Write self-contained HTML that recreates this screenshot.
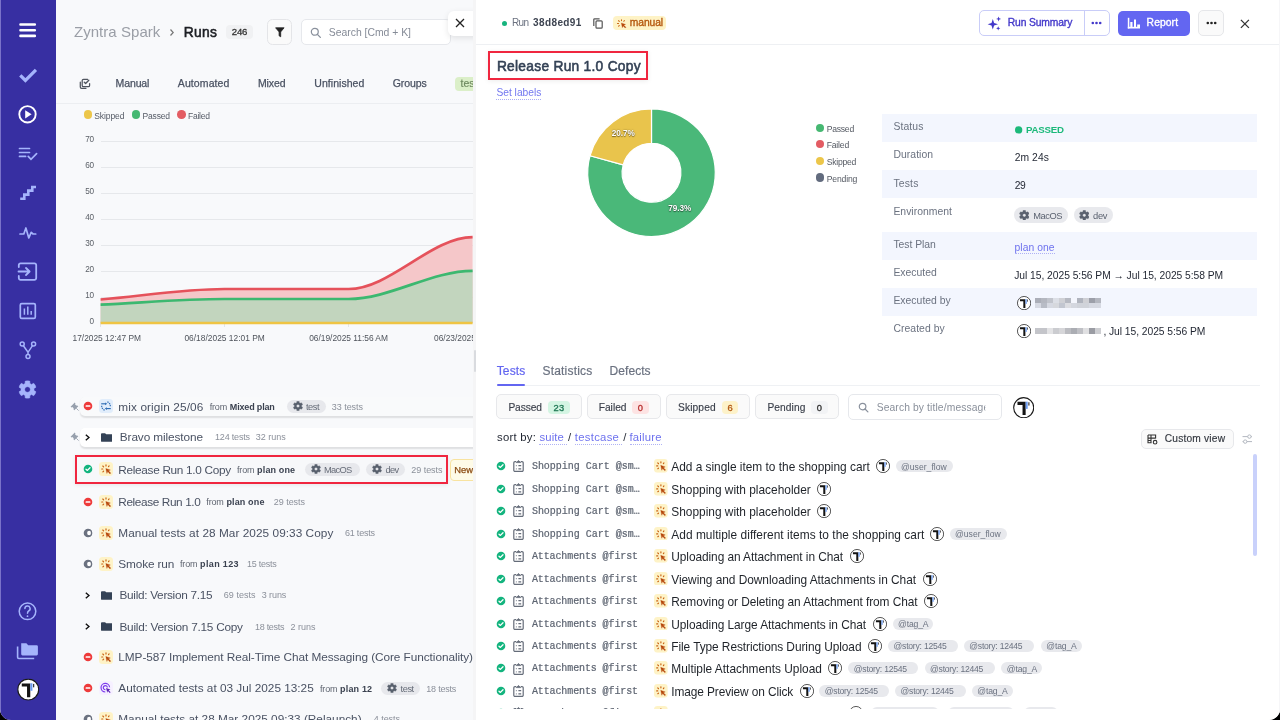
<!DOCTYPE html>
<html><head><meta charset="utf-8">
<style>
*{box-sizing:border-box;margin:0;padding:0}
html,body{width:1280px;height:720px;overflow:hidden;background:#000;font-family:"Liberation Sans",sans-serif}
#app{position:absolute;left:0;top:0;width:1280px;height:720px;border-radius:0 0 11px 11px;overflow:hidden;background:#f8f9fb;will-change:transform}
.a{position:absolute}
.t{position:absolute;white-space:nowrap;line-height:1}
#sb{position:absolute;left:0;top:0;width:56px;height:720px;background:#372fa2;z-index:5}
#left{position:absolute;left:0;top:0;width:473px;height:720px;overflow:hidden}
</style></head>
<body><div id="app">

<svg width="0" height="0" style="position:absolute">
<defs>
 <symbol id="st-fail" viewBox="0 0 10 10"><circle cx="5" cy="5" r="4.3" fill="#ee3b3b"/><rect x="2.6" y="4.3" width="4.8" height="1.5" rx=".4" fill="#fff"/></symbol>
 <symbol id="st-pass" viewBox="0 0 10 10"><circle cx="5" cy="5" r="4.3" fill="#13b47e"/><path d="M3 5.2L4.4 6.4L7 3.8" stroke="#fff" stroke-width="1.3" fill="none" stroke-linecap="round" stroke-linejoin="round"/></symbol>
 <symbol id="st-prog" viewBox="0 0 10 10"><circle cx="5" cy="5" r="4.3" fill="#6b7280"/><circle cx="6.3" cy="5" r="2.2" fill="#fff"/><path d="M5 1.5A3.5 3.5 0 0 1 5 8.5" stroke="#6b7280" stroke-width="1.2" fill="none"/></symbol>
 <symbol id="ic-man" viewBox="0 0 14 14"><rect width="14" height="14" rx="3.5" fill="#fef3c7"/>
   <g stroke="#c8610f" stroke-width="1.15" stroke-linecap="round"><path d="M3.8 4L4.6 4.8"/><path d="M7 2.9V3.9"/><path d="M10.1 3.9L9.5 4.6"/><path d="M2.7 7H3.8"/><path d="M3.9 9.9L4.6 9.2"/></g>
   <path d="M6.8 6.4L11.4 8L9.5 8.8L11.8 11.1L11 11.9L8.7 9.6L7.9 11.5Z" fill="#b8480c" stroke="#b8480c" stroke-width=".3" stroke-linejoin="round"/></symbol>
 <symbol id="ic-auto" viewBox="0 0 14 14"><rect width="14" height="14" rx="3.5" fill="#f6f0ff"/>
   <g stroke="#7c3aed" stroke-width="1.2" fill="none"><path d="M10.6 6.2A4.3 4.3 0 1 0 6.3 11"/><path d="M8.3 6.6A2 2 0 1 0 6.4 8.6"/></g>
   <path d="M7.1 7.1L11.4 8.6L9.7 9.3L11.6 11.2L10.8 12L8.9 10.1L8.2 11.8Z" fill="#5b21b6"/></symbol>
 <symbol id="ic-mix" viewBox="0 0 14 14"><rect width="14" height="14" rx="3.5" fill="#e1edfb"/>
   <g stroke="#2f6db5" stroke-width="1.15" fill="none"><path d="M8.4 2.9A4.3 4.3 0 0 1 11.3 7.4" stroke-dasharray="1.3 .8"/><path d="M5.6 11.1A4.3 4.3 0 0 1 2.7 6.6" stroke-dasharray="1.3 .8"/><path d="M2.2 4.8H6.6"/><path d="M11.8 9.6H7.4"/></g>
   <path d="M8.2 4.8L6.1 3.4V6.2Z M5.8 9.6L7.9 8.2V11Z" fill="#2f6db5"/></symbol>
 <symbol id="ic-folder" viewBox="0 0 12 9"><path d="M0 1A1 1 0 0 1 1 0H4.2L5.4 1.2H11A1 1 0 0 1 12 2.2V8A1 1 0 0 1 11 9H1A1 1 0 0 1 0 8Z" fill="#344256"/></symbol>
 <symbol id="ic-chev" viewBox="0 0 5 7"><path d="M.8 .7L4 3.5L.8 6.3" stroke="#111" stroke-width="1.4" fill="none"/></symbol>
 <symbol id="ic-pin" viewBox="0 0 9 9"><g transform="translate(9 0) scale(-1 1)"><path d="M4.2 .6L8.4 4.8L7.6 5.4L6.6 5.1L5.4 6.3L5.3 7.8L4.7 8.3L.7 4.3L1.2 3.7L2.7 3.6L3.9 2.4L3.6 1.4Z" fill="#97a0ad"/><path d="M2.7 6.3L.4 8.6" stroke="#97a0ad" stroke-width=".9"/></g></symbol>
 <symbol id="ic-gear" viewBox="-10.5 -10.5 21 21"><path fill="currentColor" fill-rule="evenodd" stroke="currentColor" stroke-width=".6" stroke-linejoin="round" d="M-2.77 -6.86L-2.59 -9.66A10 10 0 0 1 2.59 -9.66L2.77 -6.86A7.4 7.4 0 0 1 4.56 -5.83L7.07 -7.07A10 10 0 0 1 9.66 -2.59L7.33 -1.03A7.4 7.4 0 0 1 7.33 1.03L9.66 2.59A10 10 0 0 1 7.07 7.07L4.56 5.83A7.4 7.4 0 0 1 2.77 6.86L2.59 9.66A10 10 0 0 1 -2.59 9.66L-2.77 6.86A7.4 7.4 0 0 1 -4.56 5.83L-7.07 7.07A10 10 0 0 1 -9.66 2.59L-7.33 1.03A7.4 7.4 0 0 1 -7.33 -1.03L-9.66 -2.59A10 10 0 0 1 -7.07 -7.07L-4.56 -5.83A7.4 7.4 0 0 1 -2.77 -6.86ZM0 -3.2A3.2 3.2 0 1 0 0.01 -3.2Z"/></symbol>
 <symbol id="ic-av" viewBox="0 0 22 22"><circle cx="11" cy="11" r="10.3" fill="#fff" stroke="#1a1a1a" stroke-width="1.15"/><path d="M4.6 5H13V18.6H9.8V8.1H4.6Z" fill="#141414"/><rect x="13.1" y="4.8" width="2" height="7.4" fill="#6b9cf2"/><rect x="15.8" y="5.4" width="1.1" height="3.4" fill="#222"/></symbol>
 <symbol id="ic-search" viewBox="0 0 12 12"><circle cx="5" cy="5" r="3.6" stroke="currentColor" stroke-width="1.3" fill="none"/><path d="M7.7 7.7L10.8 10.8" stroke="currentColor" stroke-width="1.4" stroke-linecap="round"/></symbol>
 <symbol id="ic-clip" viewBox="0 0 11 12"><path d="M3.3 1.6H2A1.2 1.2 0 0 0 .8 2.8V10.2A1.2 1.2 0 0 0 2 11.4H9A1.2 1.2 0 0 0 10.2 10.2V2.8A1.2 1.2 0 0 0 9 1.6H7.7" stroke="#656c79" stroke-width="1.2" fill="none"/><path d="M3.3 2.6L5.5 .5L7.7 2.6Z" fill="#656c79" stroke="#656c79" stroke-width=".8" stroke-linejoin="round"/><path d="M2.9 5.6H3.6M5.4 5.6H8.2M2.9 8.9H3.6M5.4 8.9H8.2" stroke="#656c79" stroke-width="1.1"/></symbol>
</defs></svg>
<div id="left">
<div class="t" style="left:74.00px;top:24.00px;font-size:15px;color:#9a9ea6;letter-spacing:0.040px;">Zyntra Spark</div>
<svg class="a" style="left:169px;top:28px" width="6" height="9"><path d="M1.5 1.5L4.2 4.5L1.5 7.5" stroke="#777" stroke-width="1.2" fill="none"/></svg>
<div class="t" style="left:183.80px;top:26.00px;font-size:13.8px;color:#1d1f24;letter-spacing:0.297px;-webkit-text-stroke:.55px #1d1f24;">Runs</div>
<div class="a" style="left:226px;top:25px;width:27px;height:14px;background:#f0f1f3;border-radius:4px"></div>
<div class="t" style="left:231.80px;top:27.00px;font-size:9.6px;color:#333;letter-spacing:-0.203px;-webkit-text-stroke:.3px #333;">246</div>
<div class="a" style="left:267.2px;top:19.2px;width:24.8px;height:25.4px;background:#fafafa;border:1px solid #e4e5e8;border-radius:5.5px"></div>
<svg class="a" style="left:274.6px;top:27px" width="11" height="11"><path d="M.6 .8H9.1L5.7 4.9V9.8L4.1 8.8V4.9Z" fill="#222" stroke="#222" stroke-width=".8" stroke-linejoin="round"/></svg>
<div class="a" style="left:301px;top:19px;width:150px;height:25.5px;background:#fff;border:1px solid #e6e8ec;border-radius:5px"></div>
<svg class="a" style="left:310.30px;top:26.50px;color:#8a919d" width="11.5" height="11.5"><use href="#ic-search" width="11.5" height="11.5"/></svg>
<div class="t" style="left:328.80px;top:28.00px;font-size:10.4px;color:#858b97;letter-spacing:-0.006px;">Search [Cmd + K]</div>
<div class="a" style="left:447.5px;top:10.5px;width:34px;height:25px;background:#fff;border-radius:6px;box-shadow:0 2px 6px rgba(0,0,0,.10)"></div>
<svg class="a" style="left:455px;top:18px" width="10" height="10"><path d="M1 1L9 9M9 1L1 9" stroke="#222" stroke-width="1.3"/></svg>
<svg class="a" style="left:76px;top:74px" width="20" height="20"><g stroke="#50555f" stroke-width="1.25" fill="none" stroke-linecap="round" stroke-linejoin="round"><path d="M11.6 5.3H7.5A1.3 1.3 0 0 0 6.2 6.6V11.4A1.3 1.3 0 0 0 7.5 12.7H12.3A1.3 1.3 0 0 0 13.6 11.4V9.6"/><path d="M8.3 8.3L9.6 9.5L12.8 6.2" stroke-width="1.35"/><path d="M4.3 8.2V13.1A1.3 1.3 0 0 0 5.6 14.4H9.9"/></g></svg>
<div class="t" style="left:115.60px;top:78.00px;font-size:10.5px;color:#4a5262;letter-spacing:-0.128px;-webkit-text-stroke:.25px #4a5262;">Manual</div>
<div class="t" style="left:177.80px;top:78.00px;font-size:10.5px;color:#4a5262;letter-spacing:0.102px;-webkit-text-stroke:.25px #4a5262;">Automated</div>
<div class="t" style="left:257.90px;top:78.00px;font-size:10.5px;color:#4a5262;letter-spacing:-0.052px;-webkit-text-stroke:.25px #4a5262;">Mixed</div>
<div class="t" style="left:314.30px;top:78.00px;font-size:10.5px;color:#4a5262;letter-spacing:0.043px;-webkit-text-stroke:.25px #4a5262;">Unfinished</div>
<div class="t" style="left:392.70px;top:78.00px;font-size:10.5px;color:#4a5262;letter-spacing:-0.087px;-webkit-text-stroke:.25px #4a5262;">Groups</div>
<div class="a" style="left:455px;top:76.5px;width:40px;height:14.5px;background:#dbefc8;border-radius:4px"></div>
<div class="t" style="left:460.60px;top:78.00px;font-size:10.5px;color:#6f8a60;-webkit-text-stroke:.2px #6f8a60;">tes</div>
<div class="a" style="left:56px;top:103px;width:417px;height:1px;background:#eceef1"></div>
<div class="a" style="left:83.70px;top:110.4px;width:8.6px;height:8.6px;border-radius:50%;background:#ecc64a"></div>
<div class="t" style="left:94.20px;top:112.00px;font-size:8.5px;color:#555b66;letter-spacing:-0.086px;">Skipped</div>
<div class="a" style="left:131.60px;top:110.4px;width:8.6px;height:8.6px;border-radius:50%;background:#45b872"></div>
<div class="t" style="left:142.50px;top:112.00px;font-size:8.5px;color:#555b66;letter-spacing:-0.150px;">Passed</div>
<div class="a" style="left:177.10px;top:110.4px;width:8.6px;height:8.6px;border-radius:50%;background:#e35d63"></div>
<div class="t" style="left:188.00px;top:112.00px;font-size:8.5px;color:#555b66;letter-spacing:-0.230px;">Failed</div>
<div class="a" style="left:100.6px;top:140.5px;width:373px;height:1px;background:#e6e8eb"></div>
<div class="t" style="left:85.25px;top:136.00px;font-size:8.2px;color:#5c6168;letter-spacing:-0.357px;">70</div>
<div class="a" style="left:100.6px;top:166.5px;width:373px;height:1px;background:#e6e8eb"></div>
<div class="t" style="left:85.25px;top:162.00px;font-size:8.2px;color:#5c6168;letter-spacing:-0.357px;">60</div>
<div class="a" style="left:100.6px;top:192.5px;width:373px;height:1px;background:#e6e8eb"></div>
<div class="t" style="left:85.25px;top:188.00px;font-size:8.2px;color:#5c6168;letter-spacing:-0.357px;">50</div>
<div class="a" style="left:100.6px;top:218.5px;width:373px;height:1px;background:#e6e8eb"></div>
<div class="t" style="left:85.25px;top:214.00px;font-size:8.2px;color:#5c6168;letter-spacing:-0.357px;">40</div>
<div class="a" style="left:100.6px;top:244.5px;width:373px;height:1px;background:#e6e8eb"></div>
<div class="t" style="left:85.25px;top:240.00px;font-size:8.2px;color:#5c6168;letter-spacing:-0.357px;">30</div>
<div class="a" style="left:100.6px;top:270.5px;width:373px;height:1px;background:#e6e8eb"></div>
<div class="t" style="left:85.25px;top:266.00px;font-size:8.2px;color:#5c6168;letter-spacing:-0.357px;">20</div>
<div class="a" style="left:100.6px;top:296.5px;width:373px;height:1px;background:#e6e8eb"></div>
<div class="t" style="left:85.25px;top:292.00px;font-size:8.2px;color:#5c6168;letter-spacing:-0.357px;">10</div>
<div class="t" style="left:89.60px;top:318.00px;font-size:8.2px;color:#5c6168;">0</div>
<div class="t" style="left:72.50px;top:334.00px;font-size:8.4px;color:#4f545c;">17/2025 12:47 PM</div>
<div class="t" style="left:184.40px;top:334.00px;font-size:8.4px;color:#4f545c;letter-spacing:0.017px;">06/18/2025 12:01 PM</div>
<div class="t" style="left:309.20px;top:334.00px;font-size:8.4px;color:#4f545c;letter-spacing:-0.015px;">06/19/2025 11:56 AM</div>
<div class="t" style="left:434.00px;top:334.00px;font-size:8.4px;color:#4f545c;">06/23/2025 12:00 PM</div>
<div class="a" style="left:100.1px;top:323px;width:1px;height:4px;background:#e3e5e8"></div>
<div class="a" style="left:224.0px;top:323px;width:1px;height:4px;background:#e3e5e8"></div>
<div class="a" style="left:348.1px;top:323px;width:1px;height:4px;background:#e3e5e8"></div>
<svg class="a" style="left:0;top:0" width="473" height="330">
<path d="M100.6 299.5 C141.90 296.00 183.20 289.00 224.5 289.0 C265.87 289.00 307.23 289.00 348.6 289.0 C389.93 289.00 431.27 237.20 472.6 237.2 L472.6 323 L100.6 323Z" fill="#f5c7c9"/>
<path d="M100.6 304.6 C141.90 302.73 183.20 299.00 224.5 299.0 C265.87 299.00 307.23 299.00 348.6 299.0 C389.93 299.00 431.27 270.80 472.6 270.8 L472.6 323 L100.6 323Z" fill="#c2d5be"/>
<path d="M100.6 299.5 C141.90 296.00 183.20 289.00 224.5 289.0 C265.87 289.00 307.23 289.00 348.6 289.0 C389.93 289.00 431.27 237.20 472.6 237.2" stroke="#e5525b" stroke-width="2.7" fill="none"/>
<path d="M100.6 304.6 C141.90 302.73 183.20 299.00 224.5 299.0 C265.87 299.00 307.23 299.00 348.6 299.0 C389.93 299.00 431.27 270.80 472.6 270.8" stroke="#3cb870" stroke-width="2.7" fill="none"/>
<path d="M100.6 323H472.6" stroke="#efc443" stroke-width="2.6"/>
</svg>
<div class="a" style="left:79.5px;top:397px;width:400px;height:19px;background:#f9fafb;border-radius:5px;box-shadow:0 1.5px 1.5px rgba(0,0,0,.10)"></div>
<div class="a" style="left:79.5px;top:427.5px;width:400px;height:19.3px;background:#fff;border-radius:5px;box-shadow:0 1.5px 1.5px rgba(0,0,0,.10)"></div>
<svg class="a" style="left:69.60px;top:401.80px;" width="9" height="9"><use href="#ic-pin" width="9" height="9"/></svg>
<svg class="a" style="left:69.60px;top:432.30px;" width="9" height="9"><use href="#ic-pin" width="9" height="9"/></svg>
<svg class="a" style="left:82.70px;top:401.40px;" width="10" height="10"><use href="#st-fail" width="10" height="10"/></svg>
<svg class="a" style="left:98.70px;top:399.40px;" width="14" height="14"><use href="#ic-mix" width="14" height="14"/></svg>
<div class="t" style="left:118.30px;top:402.00px;font-size:11.8px;color:#4a5263;letter-spacing:0.115px;">mix origin 25/06</div>
<div class="t" style="left:209.70px;top:403.00px;font-size:9px;color:#5f6570;letter-spacing:-0.167px;">from</div>
<div class="t" style="left:229.80px;top:403.00px;font-size:9px;color:#3b4250;font-weight:bold;letter-spacing:-0.167px;">Mixed plan</div>
<div class="a" style="left:286.60px;top:399.80px;width:39.60px;height:13.2px;background:#e7e8ec;border-radius:7px"></div>
<svg class="a" style="left:292.70px;top:401.20px;color:#58606d" width="10" height="10"><use href="#ic-gear" width="10" height="10"/></svg>
<div class="t" style="left:305.90px;top:403.00px;font-size:9.3px;color:#666c78;letter-spacing:-0.462px;">test</div>
<div class="t" style="left:331.80px;top:403.00px;font-size:9px;color:#8b909a;letter-spacing:-0.045px;">33 tests</div>
<svg class="a" style="left:84.80px;top:433.80px;" width="5" height="7"><use href="#ic-chev" width="5" height="7"/></svg>
<svg class="a" style="left:100.90px;top:432.60px;" width="11.6" height="9"><use href="#ic-folder" width="11.6" height="9"/></svg>
<div class="t" style="left:119.80px;top:432.00px;font-size:11.8px;color:#4a5263;letter-spacing:-0.099px;">Bravo milestone</div>
<div class="t" style="left:215.00px;top:433.00px;font-size:9px;color:#8b909a;letter-spacing:-0.190px;">124 tests</div>
<div class="t" style="left:255.80px;top:433.00px;font-size:9px;color:#8b909a;">32 runs</div>
<div class="a" style="left:75.3px;top:455.3px;width:373.1px;height:28.3px;border:2.4px solid #f0263f;box-shadow:0 1px 4px rgba(0,0,0,.08);background:#f7f8fa"></div>
<svg class="a" style="left:82.70px;top:464.40px;" width="10" height="10"><use href="#st-pass" width="10" height="10"/></svg>
<svg class="a" style="left:98.70px;top:462.40px;" width="14" height="14"><use href="#ic-man" width="14" height="14"/></svg>
<div class="t" style="left:118.30px;top:465.00px;font-size:11.8px;color:#4a5263;letter-spacing:-0.310px;">Release Run 1.0 Copy</div>
<div class="t" style="left:237.00px;top:466.00px;font-size:9px;color:#5f6570;letter-spacing:-0.167px;">from</div>
<div class="t" style="left:257.10px;top:466.00px;font-size:9px;color:#3b4250;font-weight:bold;letter-spacing:0.143px;">plan one</div>
<div class="a" style="left:304.70px;top:462.80px;width:55.50px;height:13.2px;background:#e7e8ec;border-radius:7px"></div>
<svg class="a" style="left:310.80px;top:464.20px;color:#58606d" width="10" height="10"><use href="#ic-gear" width="10" height="10"/></svg>
<div class="t" style="left:324.00px;top:466.00px;font-size:9.3px;color:#666c78;letter-spacing:-0.674px;">MacOS</div>
<div class="a" style="left:366.20px;top:462.80px;width:39.00px;height:13.2px;background:#e7e8ec;border-radius:7px"></div>
<svg class="a" style="left:372.30px;top:464.20px;color:#58606d" width="10" height="10"><use href="#ic-gear" width="10" height="10"/></svg>
<div class="t" style="left:385.50px;top:466.00px;font-size:9.3px;color:#666c78;letter-spacing:-0.695px;">dev</div>
<div class="t" style="left:411.30px;top:466.00px;font-size:9px;color:#8b909a;letter-spacing:-0.045px;">29 tests</div>
<div class="a" style="left:450px;top:458.7px;width:40px;height:22.3px;background:#fefbe8;border:1px solid #f8e3a0;border-radius:4px"></div>
<div class="t" style="left:454.20px;top:465.00px;font-size:9.4px;color:#8a4a12;-webkit-text-stroke:.25px #8a4a12;">New</div>
<svg class="a" style="left:82.70px;top:497.00px;" width="10" height="10"><use href="#st-fail" width="10" height="10"/></svg>
<svg class="a" style="left:98.70px;top:495.00px;" width="14" height="14"><use href="#ic-man" width="14" height="14"/></svg>
<div class="t" style="left:118.30px;top:497.00px;font-size:11.8px;color:#4a5263;letter-spacing:-0.384px;">Release Run 1.0</div>
<div class="t" style="left:206.30px;top:498.00px;font-size:9px;color:#5f6570;letter-spacing:-0.167px;">from</div>
<div class="t" style="left:226.40px;top:498.00px;font-size:9px;color:#3b4250;font-weight:bold;letter-spacing:0.143px;">plan one</div>
<div class="t" style="left:273.80px;top:498.00px;font-size:9px;color:#8b909a;letter-spacing:-0.045px;">29 tests</div>
<svg class="a" style="left:82.70px;top:528.00px;" width="10" height="10"><use href="#st-prog" width="10" height="10"/></svg>
<svg class="a" style="left:98.70px;top:526.00px;" width="14" height="14"><use href="#ic-man" width="14" height="14"/></svg>
<div class="t" style="left:118.30px;top:528.00px;font-size:11.8px;color:#4a5263;letter-spacing:0.051px;">Manual tests at 28 Mar 2025 09:33 Copy</div>
<div class="t" style="left:345.00px;top:529.00px;font-size:9px;color:#8b909a;letter-spacing:-0.217px;">61 tests</div>
<svg class="a" style="left:82.70px;top:558.70px;" width="10" height="10"><use href="#st-prog" width="10" height="10"/></svg>
<svg class="a" style="left:98.70px;top:556.70px;" width="14" height="14"><use href="#ic-man" width="14" height="14"/></svg>
<div class="t" style="left:118.30px;top:559.00px;font-size:11.8px;color:#4a5263;letter-spacing:-0.130px;">Smoke run</div>
<div class="t" style="left:180.00px;top:560.00px;font-size:9px;color:#5f6570;letter-spacing:-0.167px;">from</div>
<div class="t" style="left:200.10px;top:560.00px;font-size:9px;color:#3b4250;font-weight:bold;letter-spacing:0.355px;">plan 123</div>
<div class="t" style="left:247.00px;top:560.00px;font-size:9px;color:#8b909a;letter-spacing:-0.260px;">15 tests</div>
<svg class="a" style="left:84.80px;top:591.80px;" width="5" height="7"><use href="#ic-chev" width="5" height="7"/></svg>
<svg class="a" style="left:100.90px;top:590.60px;" width="11.6" height="9"><use href="#ic-folder" width="11.6" height="9"/></svg>
<div class="t" style="left:119.50px;top:590.00px;font-size:11.8px;color:#4a5263;letter-spacing:-0.298px;">Build: Version 7.15</div>
<div class="t" style="left:223.80px;top:591.00px;font-size:9px;color:#8b909a;letter-spacing:0.026px;">69 tests</div>
<div class="t" style="left:261.80px;top:591.00px;font-size:9px;color:#8b909a;letter-spacing:-0.103px;">3 runs</div>
<svg class="a" style="left:84.80px;top:623.20px;" width="5" height="7"><use href="#ic-chev" width="5" height="7"/></svg>
<svg class="a" style="left:100.90px;top:622.00px;" width="11.6" height="9"><use href="#ic-folder" width="11.6" height="9"/></svg>
<div class="t" style="left:119.50px;top:622.00px;font-size:11.8px;color:#4a5263;letter-spacing:-0.247px;">Build: Version 7.15 Copy</div>
<div class="t" style="left:255.00px;top:623.00px;font-size:9px;color:#8b909a;letter-spacing:-0.288px;">18 tests</div>
<div class="t" style="left:290.50px;top:623.00px;font-size:9px;color:#8b909a;">2 runs</div>
<svg class="a" style="left:82.70px;top:652.20px;" width="10" height="10"><use href="#st-fail" width="10" height="10"/></svg>
<svg class="a" style="left:98.70px;top:650.20px;" width="14" height="14"><use href="#ic-man" width="14" height="14"/></svg>
<div class="t" style="left:118.30px;top:652.00px;font-size:11.8px;color:#4a5263;letter-spacing:-0.056px;">LMP-587 Implement Real-Time Chat Messaging (Core Functionality)</div>
<svg class="a" style="left:82.70px;top:683.20px;" width="10" height="10"><use href="#st-fail" width="10" height="10"/></svg>
<svg class="a" style="left:98.70px;top:681.20px;" width="14" height="14"><use href="#ic-auto" width="14" height="14"/></svg>
<div class="t" style="left:118.30px;top:683.00px;font-size:11.8px;color:#4a5263;">Automated tests at 03 Jul 2025 13:25</div>
<div class="t" style="left:320.00px;top:685.00px;font-size:9px;color:#5f6570;letter-spacing:-0.167px;">from</div>
<div class="t" style="left:340.10px;top:685.00px;font-size:9px;color:#3b4250;font-weight:bold;letter-spacing:0.165px;">plan 12</div>
<div class="a" style="left:381.30px;top:681.60px;width:39.20px;height:13.2px;background:#e7e8ec;border-radius:7px"></div>
<svg class="a" style="left:387.40px;top:683.00px;color:#58606d" width="10" height="10"><use href="#ic-gear" width="10" height="10"/></svg>
<div class="t" style="left:400.60px;top:685.00px;font-size:9.3px;color:#666c78;letter-spacing:-0.462px;">test</div>
<div class="t" style="left:426.30px;top:685.00px;font-size:9px;color:#8b909a;letter-spacing:-0.217px;">18 tests</div>
<svg class="a" style="left:82.70px;top:713.60px;" width="10" height="10"><use href="#st-prog" width="10" height="10"/></svg>
<svg class="a" style="left:98.70px;top:711.60px;" width="14" height="14"><use href="#ic-man" width="14" height="14"/></svg>
<div class="t" style="left:118.30px;top:714.00px;font-size:11.8px;color:#4a5263;">Manual tests at 28 Mar 2025 09:33 (Relaunch)</div>
<div class="t" style="left:373.80px;top:715.00px;font-size:9px;color:#8b909a;letter-spacing:-0.052px;">4 tests</div>
</div>
<div class="a" style="left:473px;top:0;width:3px;height:720px;background:#f5f5f6"></div>
<div class="a" style="left:473.5px;top:349.5px;width:2.5px;height:22px;background:#d9dbdf;border-radius:2px"></div>
<div class="a" style="left:476px;top:0;width:804px;height:720px;background:#fff"></div>
<div class="a" style="left:1279px;top:0;width:1px;height:720px;background:#f6f6f8"></div>
<div class="a" style="left:476px;top:44px;width:803px;height:1px;background:#eef0f3"></div>
<div class="a" style="left:502.2px;top:20.9px;width:5px;height:5px;border-radius:50%;background:#17b47e"></div>
<div class="t" style="left:511.90px;top:18.00px;font-size:10px;color:#6b7280;letter-spacing:-0.622px;">Run</div>
<div class="t" style="left:533.00px;top:18.00px;font-size:10px;color:#3d4451;font-weight:bold;letter-spacing:0.402px;">38d8ed91</div>
<svg class="a" style="left:593px;top:18px" width="10" height="11"><rect x="3" y="2.8" width="6.2" height="7.4" rx="1" stroke="#555" stroke-width="1.2" fill="none"/><path d="M.8 8V1.6A.8.8 0 0 1 1.6 .8H6.6" stroke="#555" stroke-width="1.2" fill="none"/></svg>
<div class="a" style="left:613px;top:16.2px;width:52.8px;height:13.5px;background:#fef3c6;border-radius:4px"></div>
<svg class="a" style="left:614.50px;top:16.50px;" width="13" height="13"><use href="#ic-man" width="13" height="13"/></svg>
<div class="a" style="left:614.5px;top:16.5px;width:13px;height:13px;background:#fef3c6;mix-blend-mode:multiply;opacity:0"></div>
<div class="t" style="left:629.80px;top:18.00px;font-size:10.3px;color:#b5580e;letter-spacing:-0.094px;-webkit-text-stroke:.35px #b5580e;">manual</div>
<div class="a" style="left:979px;top:10.3px;width:130.6px;height:25.6px;border:1px solid #c9cdf8;border-radius:5px;background:#fff"></div>
<div class="a" style="left:1084px;top:10.3px;width:1px;height:25.6px;background:#c9cdf8"></div>
<svg class="a" style="left:987px;top:16px" width="15" height="15"><path d="M5.8 3L7.1 6.9L11 8.2L7.1 9.5L5.8 13.4L4.5 9.5L.6 8.2L4.5 6.9Z" fill="#4338ca"/><path d="M11.6 .4L12.3 2.2L14.1 2.9L12.3 3.6L11.6 5.4L10.9 3.6L9.1 2.9L10.9 2.2Z" fill="#4338ca"/><path d="M11.2 10.2L11.8 11.7L13.3 12.3L11.8 12.9L11.2 14.4L10.6 12.9L9.1 12.3L10.6 11.7Z" fill="#4338ca"/></svg>
<div class="t" style="left:1007.80px;top:18.00px;font-size:10.3px;color:#4338ca;letter-spacing:-0.130px;-webkit-text-stroke:.35px #4338ca;">Run Summary</div>
<svg class="a" style="left:1091px;top:21px" width="11" height="4"><circle cx="1.8" cy="2" r="1.3" fill="#4338ca"/><circle cx="5.5" cy="2" r="1.3" fill="#4338ca"/><circle cx="9.2" cy="2" r="1.3" fill="#4338ca"/></svg>
<div class="a" style="left:1117.8px;top:10.6px;width:72.2px;height:25.3px;border-radius:5px;background:#6366f1"></div>
<svg class="a" style="left:1127px;top:17px" width="14" height="12"><g fill="#fff"><rect x=".8" y=".8" width="1.5" height="10.7"/><rect x=".8" y="9.8" width="12.2" height="1.7"/><rect x="3.3" y="5" width="2.2" height="5"/><rect x="7" y="2.5" width="2" height="7.5"/><rect x="10.2" y="7.5" width="2.8" height="3"/></g></svg>
<div class="t" style="left:1146.60px;top:18.00px;font-size:10.3px;color:#ffffff;letter-spacing:0.099px;-webkit-text-stroke:.35px #fff;">Report</div>
<div class="a" style="left:1198px;top:10.3px;width:25.5px;height:25.6px;border:1px solid #e6e7ea;border-radius:5px;background:#fafafa"></div>
<svg class="a" style="left:1205.5px;top:21px" width="11" height="4"><circle cx="1.8" cy="2" r="1.3" fill="#222"/><circle cx="5.5" cy="2" r="1.3" fill="#222"/><circle cx="9.2" cy="2" r="1.3" fill="#222"/></svg>
<svg class="a" style="left:1240px;top:18.5px" width="10" height="10"><path d="M.9 .9L8.9 8.9M8.9 .9L.9 8.9" stroke="#333" stroke-width="1.3"/></svg>
<div class="a" style="left:487.6px;top:51.4px;width:160.5px;height:28.2px;border:2.4px solid #f0263f;box-shadow:0 1px 5px rgba(0,0,0,.08)"></div>
<div class="t" style="left:496.90px;top:60.00px;font-size:13.75px;color:#334155;letter-spacing:0.282px;-webkit-text-stroke:.55px #334155;">Release Run 1.0 Copy</div>
<div class="t" style="left:496.40px;top:88.00px;font-size:10.25px;color:#7378f0;">Set labels</div>
<div class="a" style="left:496.4px;top:99.2px;width:45px;height:0;border-top:1px dotted #a9acf5"></div>
<svg class="a" style="left:0;top:0" width="800" height="250"><path d="M651.50 108.95 A63.8 63.8 0 1 1 590.01 155.72 L623.17 164.90 A29.4 29.4 0 1 0 651.50 143.35Z" fill="#4ab879" stroke="#fff" stroke-width="1.2" stroke-linejoin="round"/><path d="M590.01 155.72 A63.8 63.8 0 0 1 651.50 108.95 L651.50 143.35 A29.4 29.4 0 0 0 623.17 164.90Z" fill="#e9c44c" stroke="#fff" stroke-width="1.2" stroke-linejoin="round"/></svg>
<div class="t" style="left:611.80px;top:130.00px;font-size:8.2px;color:#fff;font-weight:bold;letter-spacing:-0.054px;text-shadow:0 0 1.5px rgba(0,0,0,.55),0 .5px 1px rgba(0,0,0,.4);">20.7%</div>
<div class="t" style="left:668.20px;top:205.00px;font-size:8.2px;color:#fff;font-weight:bold;letter-spacing:-0.054px;text-shadow:0 0 1.5px rgba(0,0,0,.55),0 .5px 1px rgba(0,0,0,.4);">79.3%</div>
<div class="a" style="left:815.9px;top:123.65px;width:8.3px;height:8.3px;border-radius:50%;background:#46b872"></div>
<div class="t" style="left:826.70px;top:125.00px;font-size:8.6px;color:#555a63;letter-spacing:-0.233px;">Passed</div>
<div class="a" style="left:815.9px;top:140.05px;width:8.3px;height:8.3px;border-radius:50%;background:#e35c63"></div>
<div class="t" style="left:826.70px;top:141.00px;font-size:8.6px;color:#555a63;letter-spacing:-0.181px;">Failed</div>
<div class="a" style="left:815.9px;top:156.75px;width:8.3px;height:8.3px;border-radius:50%;background:#ecc64a"></div>
<div class="t" style="left:826.70px;top:158.00px;font-size:8.6px;color:#555a63;letter-spacing:-0.243px;">Skipped</div>
<div class="a" style="left:815.9px;top:173.25px;width:8.3px;height:8.3px;border-radius:50%;background:#626b7e"></div>
<div class="t" style="left:826.70px;top:175.00px;font-size:8.6px;color:#555a63;letter-spacing:-0.156px;">Pending</div>
<div class="a" style="left:882px;top:113.9px;width:375px;height:27.80px;background:#f3f6fe"></div>
<div class="a" style="left:882px;top:170.2px;width:375px;height:27.80px;background:#f3f6fe"></div>
<div class="a" style="left:882px;top:232px;width:375px;height:27.80px;background:#f3f6fe"></div>
<div class="a" style="left:882px;top:288.1px;width:375px;height:27.50px;background:#f3f6fe"></div>
<div class="t" style="left:893.40px;top:122.00px;font-size:10.4px;color:#6b7280;letter-spacing:0.109px;">Status</div>
<div class="t" style="left:893.40px;top:150.00px;font-size:10.4px;color:#6b7280;letter-spacing:0.061px;">Duration</div>
<div class="t" style="left:893.40px;top:179.00px;font-size:10.4px;color:#6b7280;letter-spacing:0.187px;">Tests</div>
<div class="t" style="left:893.40px;top:207.00px;font-size:10.4px;color:#6b7280;letter-spacing:0.017px;">Environment</div>
<div class="t" style="left:893.40px;top:240.00px;font-size:10.4px;color:#6b7280;letter-spacing:-0.030px;">Test Plan</div>
<div class="t" style="left:893.40px;top:268.00px;font-size:10.4px;color:#6b7280;">Executed</div>
<div class="t" style="left:893.40px;top:296.00px;font-size:10.4px;color:#6b7280;letter-spacing:0.022px;">Executed by</div>
<div class="t" style="left:893.40px;top:324.00px;font-size:10.4px;color:#6b7280;letter-spacing:0.064px;">Created by</div>
<svg class="a" style="left:1014px;top:125px" width="10" height="10"><circle cx="4.65" cy="4.95" r="3.65" fill="#1cb97a"/></svg>
<div class="t" style="left:1026.00px;top:125.00px;font-size:9.7px;color:#1cb97a;font-weight:bold;letter-spacing:-0.224px;">PASSED</div>
<div class="t" style="left:1014.80px;top:153.00px;font-size:10.3px;color:#1f2430;letter-spacing:0.047px;">2m 24s</div>
<div class="t" style="left:1014.80px;top:181.00px;font-size:10.3px;color:#1f2430;letter-spacing:-0.453px;">29</div>
<div class="a" style="left:1014px;top:206.7px;width:54.00px;height:16.70px;background:#e8e9ed;border-radius:9px"></div>
<svg class="a" style="left:1018.90px;top:209.75px;color:#5b6270" width="10.6" height="10.6"><use href="#ic-gear" width="10.6" height="10.6"/></svg>
<div class="t" style="left:1033.20px;top:212.00px;font-size:9.3px;color:#5b6270;letter-spacing:-0.449px;">MacOS</div>
<div class="a" style="left:1073.9px;top:206.7px;width:38.70px;height:16.70px;background:#e8e9ed;border-radius:9px"></div>
<svg class="a" style="left:1078.80px;top:209.75px;color:#5b6270" width="10.6" height="10.6"><use href="#ic-gear" width="10.6" height="10.6"/></svg>
<div class="t" style="left:1093.10px;top:212.00px;font-size:9.3px;color:#5b6270;letter-spacing:-0.295px;">dev</div>
<div class="t" style="left:1014.60px;top:243.00px;font-size:10.3px;color:#6e72ee;letter-spacing:0.042px;">plan one</div>
<div class="a" style="left:1014.6px;top:253px;width:40px;height:0;border-top:1px dotted #aeb1f5"></div>
<div class="t" style="left:1014.20px;top:271.00px;font-size:10.3px;color:#1f2430;letter-spacing:-0.039px;">Jul 15, 2025 5:56 PM → Jul 15, 2025 5:58 PM</div>
<svg class="a" style="left:1016.90px;top:296.10px;" width="14.2" height="14.2"><use href="#ic-av" width="14.2" height="14.2"/></svg>
<svg class="a" style="left:1016.90px;top:324.20px;" width="14.2" height="14.2"><use href="#ic-av" width="14.2" height="14.2"/></svg>
<div class="a" style="left:1035.00px;top:297.80px;width:6.10px;height:5.3999999999999995px;background:#abaeb8"></div>
<div class="a" style="left:1041.00px;top:297.80px;width:6.10px;height:5.3999999999999995px;background:#b4b7c0"></div>
<div class="a" style="left:1047.00px;top:297.80px;width:6.10px;height:5.3999999999999995px;background:#c1c4cc"></div>
<div class="a" style="left:1053.00px;top:297.80px;width:6.10px;height:5.3999999999999995px;background:#dcdfe6"></div>
<div class="a" style="left:1059.00px;top:297.80px;width:6.10px;height:5.3999999999999995px;background:#cfd0d5"></div>
<div class="a" style="left:1065.00px;top:297.80px;width:6.10px;height:5.3999999999999995px;background:#b6b9c2"></div>
<div class="a" style="left:1071.00px;top:297.80px;width:6.10px;height:5.3999999999999995px;background:#f4f6fd"></div>
<div class="a" style="left:1077.00px;top:297.80px;width:6.10px;height:5.3999999999999995px;background:#b0b4be"></div>
<div class="a" style="left:1083.00px;top:297.80px;width:6.10px;height:5.3999999999999995px;background:#cfd0d5"></div>
<div class="a" style="left:1089.00px;top:297.80px;width:6.10px;height:5.3999999999999995px;background:#9c9fa9"></div>
<div class="a" style="left:1095.00px;top:297.80px;width:6.10px;height:5.3999999999999995px;background:#b4b7c0"></div>
<div class="a" style="left:1035.00px;top:303.10px;width:6.10px;height:5.3999999999999995px;background:#d6d9e2"></div>
<div class="a" style="left:1041.00px;top:303.10px;width:6.10px;height:5.3999999999999995px;background:#b8bcc6"></div>
<div class="a" style="left:1047.00px;top:303.10px;width:6.10px;height:5.3999999999999995px;background:#d6d9e2"></div>
<div class="a" style="left:1053.00px;top:303.10px;width:6.10px;height:5.3999999999999995px;background:#d6d8dd"></div>
<div class="a" style="left:1059.00px;top:303.10px;width:6.10px;height:5.3999999999999995px;background:#c2c6d0"></div>
<div class="a" style="left:1065.00px;top:303.10px;width:6.10px;height:5.3999999999999995px;background:#dcdde2"></div>
<div class="a" style="left:1071.00px;top:303.10px;width:6.10px;height:5.3999999999999995px;background:#d4d7df"></div>
<div class="a" style="left:1077.00px;top:303.10px;width:6.10px;height:5.3999999999999995px;background:#d0d3da"></div>
<div class="a" style="left:1083.00px;top:303.10px;width:6.10px;height:5.3999999999999995px;background:#d0d3da"></div>
<div class="a" style="left:1089.00px;top:303.10px;width:6.10px;height:5.3999999999999995px;background:#d6d9e2"></div>
<div class="a" style="left:1095.00px;top:303.10px;width:6.10px;height:5.3999999999999995px;background:#d6d9e2"></div>
<div class="a" style="left:1035.00px;top:327.90px;width:6.10px;height:6.0px;background:#c4c5ca"></div>
<div class="a" style="left:1041.00px;top:327.90px;width:6.10px;height:6.0px;background:#c4c5ca"></div>
<div class="a" style="left:1047.00px;top:327.90px;width:6.10px;height:6.0px;background:#e3e3e5"></div>
<div class="a" style="left:1053.00px;top:327.90px;width:6.10px;height:6.0px;background:#cbccd0"></div>
<div class="a" style="left:1059.00px;top:327.90px;width:6.10px;height:6.0px;background:#d6d6d9"></div>
<div class="a" style="left:1065.00px;top:327.90px;width:6.10px;height:6.0px;background:#bbbcc1"></div>
<div class="a" style="left:1071.00px;top:327.90px;width:6.10px;height:6.0px;background:#abadb3"></div>
<div class="a" style="left:1077.00px;top:327.90px;width:6.10px;height:6.0px;background:#bfc0c5"></div>
<div class="a" style="left:1083.00px;top:327.90px;width:6.10px;height:6.0px;background:#e0e0e2"></div>
<div class="a" style="left:1089.00px;top:327.90px;width:6.10px;height:6.0px;background:#9a9ca3"></div>
<div class="a" style="left:1095.00px;top:327.90px;width:6.10px;height:6.0px;background:#cdced2"></div>
<div class="t" style="left:1103.40px;top:327.00px;font-size:10.3px;color:#1f2430;letter-spacing:-0.049px;">, Jul 15, 2025 5:56 PM</div>
<div class="t" style="left:496.70px;top:365.00px;font-size:12px;color:#6366f1;letter-spacing:0.148px;-webkit-text-stroke:.2px #6366f1;">Tests</div>
<div class="t" style="left:542.50px;top:365.00px;font-size:12px;color:#6b7280;letter-spacing:0.188px;-webkit-text-stroke:.2px #6b7280;">Statistics</div>
<div class="t" style="left:609.50px;top:365.00px;font-size:12px;color:#6b7280;letter-spacing:0.070px;-webkit-text-stroke:.2px #6b7280;">Defects</div>
<div class="a" style="left:496.5px;top:385px;width:763px;height:1px;background:#eff1f4"></div>
<div class="a" style="left:496.7px;top:384.2px;width:28.8px;height:2.2px;background:#6366f1;border-radius:1px"></div>
<div class="a" style="left:496.25px;top:394.4px;width:85.35px;height:25.1px;background:#fafafa;border:1px solid #e7e8eb;border-radius:5px"></div>
<div class="t" style="left:508.40px;top:403.00px;font-size:10.2px;color:#3a3f4a;letter-spacing:-0.076px;-webkit-text-stroke:.15px #3a3f4a;">Passed</div>
<div class="a" style="left:548px;top:400.6px;width:21.70px;height:13.4px;background:#d4f5e3;border-radius:4px"></div>
<div class="t" style="left:553.55px;top:404.00px;font-size:9.3px;color:#237a57;letter-spacing:0.259px;-webkit-text-stroke:.35px #237a57;">23</div>
<div class="a" style="left:587.3px;top:394.4px;width:73.50px;height:25.1px;background:#fafafa;border:1px solid #e7e8eb;border-radius:5px"></div>
<div class="t" style="left:598.75px;top:403.00px;font-size:10.2px;color:#3a3f4a;letter-spacing:-0.009px;-webkit-text-stroke:.15px #3a3f4a;">Failed</div>
<div class="a" style="left:632.2px;top:400.6px;width:16.55px;height:13.4px;background:#fde3e3;border-radius:4px"></div>
<div class="t" style="left:637.83px;top:404.00px;font-size:9.3px;color:#b83232;-webkit-text-stroke:.35px #b83232;">0</div>
<div class="a" style="left:666.25px;top:394.4px;width:83.25px;height:25.1px;background:#fafafa;border:1px solid #e7e8eb;border-radius:5px"></div>
<div class="t" style="left:678.00px;top:403.00px;font-size:10.2px;color:#3a3f4a;letter-spacing:0.131px;-webkit-text-stroke:.15px #3a3f4a;">Skipped</div>
<div class="a" style="left:722.2px;top:400.6px;width:15.90px;height:13.4px;background:#fdf2c9;border-radius:4px"></div>
<div class="t" style="left:727.50px;top:404.00px;font-size:9.3px;color:#b45a14;-webkit-text-stroke:.35px #b45a14;">6</div>
<div class="a" style="left:755.3px;top:394.4px;width:83.60px;height:25.1px;background:#fafafa;border:1px solid #e7e8eb;border-radius:5px"></div>
<div class="t" style="left:767.50px;top:403.00px;font-size:10.2px;color:#3a3f4a;letter-spacing:0.069px;-webkit-text-stroke:.15px #3a3f4a;">Pending</div>
<div class="a" style="left:811.25px;top:400.6px;width:16.45px;height:13.4px;background:#f2f3f5;border-radius:4px"></div>
<div class="t" style="left:816.83px;top:404.00px;font-size:9.3px;color:#333;-webkit-text-stroke:.35px #333;">0</div>
<div class="a" style="left:847.8px;top:394.4px;width:154px;height:25.8px;background:#fff;border:1px solid #e6e8ec;border-radius:5px;overflow:hidden"></div>
<svg class="a" style="left:857.60px;top:401.50px;color:#8a919d" width="11" height="11"><use href="#ic-search" width="11" height="11"/></svg>
<div class="a" style="left:876px;top:398px;width:108px;height:18px;overflow:hidden"></div>
<div class="t" style="left:876.70px;top:403.00px;font-size:10.3px;color:#8a909b;letter-spacing:0.119px;clip-path:inset(0 4px 0 0);">Search by title/message</div>
<svg class="a" style="left:1013.10px;top:396.60px;" width="21.4" height="21.4"><use href="#ic-av" width="21.4" height="21.4"/></svg>
<div class="t" style="left:497.00px;top:432.00px;font-size:11.3px;color:#1f2430;letter-spacing:0.251px;">sort by:</div>
<div class="t" style="left:539.40px;top:432.00px;font-size:11.3px;color:#6e72ee;letter-spacing:0.159px;">suite</div>
<div class="a" style="left:539.4px;top:444.2px;width:28px;height:0;border-top:1px dotted #b0b3f5"></div>
<div class="t" style="left:574.80px;top:432.00px;font-size:11.3px;color:#6e72ee;letter-spacing:0.290px;">testcase</div>
<div class="a" style="left:574.8px;top:444.2px;width:47.4px;height:0;border-top:1px dotted #b0b3f5"></div>
<div class="t" style="left:629.50px;top:432.00px;font-size:11.3px;color:#6e72ee;letter-spacing:0.222px;">failure</div>
<div class="a" style="left:629.5px;top:444.2px;width:32.4px;height:0;border-top:1px dotted #b0b3f5"></div>
<div class="t" style="left:568.00px;top:432.00px;font-size:11.3px;color:#1f2430;">/</div>
<div class="t" style="left:623.20px;top:432.00px;font-size:11.3px;color:#1f2430;">/</div>
<div class="a" style="left:1141.3px;top:429px;width:92.4px;height:19.7px;background:#fafafa;border:1px solid #e7e8eb;border-radius:5px"></div>
<svg class="a" style="left:1147.3px;top:433.6px" width="12" height="11"><path d="M1 1H8.6V4.6M1 1V8.8H4.6M1 4.1H8.6M4 1V8.8M1 6.5H4" stroke="#333" stroke-width="1.1" fill="none"/><circle cx="8.1" cy="8.2" r="1.8" stroke="#333" stroke-width="1.1" fill="none"/></svg>
<div class="t" style="left:1164.80px;top:434.00px;font-size:10.2px;color:#33373f;letter-spacing:0.189px;-webkit-text-stroke:.15px #33373f;">Custom view</div>
<svg class="a" style="left:1241.5px;top:433.5px" width="11" height="10"><path d="M.5 2.6H10M.5 7.6H10" stroke="#b3b8c0" stroke-width="1"/><circle cx="7.4" cy="2.6" r="1.7" fill="#fff" stroke="#b3b8c0" stroke-width="1"/><circle cx="3.2" cy="7.6" r="1.7" fill="#fff" stroke="#b3b8c0" stroke-width="1"/></svg>
<div class="a" style="left:1253px;top:454px;width:4px;height:101.5px;background:#c9d1fb;border-radius:2px"></div>
<div class="a" style="left:476px;top:452px;width:770px;height:256.5px;overflow:hidden">
<svg class="a" style="left:20.45px;top:9.35px;" width="10" height="10"><use href="#st-pass" width="10" height="10"/></svg>
<svg class="a" style="left:37.10px;top:8.45px;" width="11" height="12"><use href="#ic-clip" width="11" height="12"/></svg>
<div class="t" style="left:55.90px;top:10.00px;font-size:10px;color:#5d6471;font-family:'Liberation Mono';letter-spacing:-0.013px;-webkit-text-stroke:.2px #5d6471;">Shopping Cart @sm…</div>
<svg class="a" style="left:178.00px;top:7.35px;" width="13.8" height="13.8"><use href="#ic-man" width="13.8" height="13.8"/></svg>
<div class="t" style="left:195.25px;top:10.00px;font-size:11.9px;color:#1f2329;letter-spacing:-0.012px;">Add a single item to the shopping cart</div>
<svg class="a" style="left:399.60px;top:7.35px;" width="14.1" height="14.1"><use href="#ic-av" width="14.1" height="14.1"/></svg>
<div class="a" style="left:419.50px;top:8.35px;width:57.50px;height:12px;background:#e8e9ed;border-radius:6px"></div>
<div class="t" style="left:425.10px;top:11.00px;font-size:8.6px;color:#6b7280;letter-spacing:0.011px;">@user_flow</div>
<svg class="a" style="left:20.45px;top:31.80px;" width="10" height="10"><use href="#st-pass" width="10" height="10"/></svg>
<svg class="a" style="left:37.10px;top:30.90px;" width="11" height="12"><use href="#ic-clip" width="11" height="12"/></svg>
<div class="t" style="left:55.90px;top:33.00px;font-size:10px;color:#5d6471;font-family:'Liberation Mono';letter-spacing:-0.013px;-webkit-text-stroke:.2px #5d6471;">Shopping Cart @sm…</div>
<svg class="a" style="left:178.00px;top:29.80px;" width="13.8" height="13.8"><use href="#ic-man" width="13.8" height="13.8"/></svg>
<div class="t" style="left:195.25px;top:33.00px;font-size:11.9px;color:#1f2329;">Shopping with placeholder</div>
<svg class="a" style="left:340.50px;top:29.80px;" width="14.1" height="14.1"><use href="#ic-av" width="14.1" height="14.1"/></svg>
<svg class="a" style="left:20.45px;top:54.25px;" width="10" height="10"><use href="#st-pass" width="10" height="10"/></svg>
<svg class="a" style="left:37.10px;top:53.35px;" width="11" height="12"><use href="#ic-clip" width="11" height="12"/></svg>
<div class="t" style="left:55.90px;top:55.00px;font-size:10px;color:#5d6471;font-family:'Liberation Mono';letter-spacing:-0.013px;-webkit-text-stroke:.2px #5d6471;">Shopping Cart @sm…</div>
<svg class="a" style="left:178.00px;top:52.25px;" width="13.8" height="13.8"><use href="#ic-man" width="13.8" height="13.8"/></svg>
<div class="t" style="left:195.25px;top:55.00px;font-size:11.9px;color:#1f2329;">Shopping with placeholder</div>
<svg class="a" style="left:340.50px;top:52.25px;" width="14.1" height="14.1"><use href="#ic-av" width="14.1" height="14.1"/></svg>
<svg class="a" style="left:20.45px;top:76.70px;" width="10" height="10"><use href="#st-pass" width="10" height="10"/></svg>
<svg class="a" style="left:37.10px;top:75.80px;" width="11" height="12"><use href="#ic-clip" width="11" height="12"/></svg>
<div class="t" style="left:55.90px;top:78.00px;font-size:10px;color:#5d6471;font-family:'Liberation Mono';letter-spacing:-0.013px;-webkit-text-stroke:.2px #5d6471;">Shopping Cart @sm…</div>
<svg class="a" style="left:178.00px;top:74.70px;" width="13.8" height="13.8"><use href="#ic-man" width="13.8" height="13.8"/></svg>
<div class="t" style="left:195.25px;top:78.00px;font-size:11.9px;color:#1f2329;letter-spacing:0.043px;">Add multiple different items to the shopping cart</div>
<svg class="a" style="left:454.00px;top:74.70px;" width="14.1" height="14.1"><use href="#ic-av" width="14.1" height="14.1"/></svg>
<div class="a" style="left:473.50px;top:75.70px;width:57.25px;height:12px;background:#e8e9ed;border-radius:6px"></div>
<div class="t" style="left:479.10px;top:78.00px;font-size:8.6px;color:#6b7280;letter-spacing:0.011px;">@user_flow</div>
<svg class="a" style="left:20.45px;top:99.15px;" width="10" height="10"><use href="#st-pass" width="10" height="10"/></svg>
<svg class="a" style="left:37.10px;top:98.25px;" width="11" height="12"><use href="#ic-clip" width="11" height="12"/></svg>
<div class="t" style="left:55.90px;top:100.00px;font-size:10px;color:#5d6471;font-family:'Liberation Mono';letter-spacing:-0.107px;-webkit-text-stroke:.2px #5d6471;">Attachments @first</div>
<svg class="a" style="left:178.00px;top:97.15px;" width="13.8" height="13.8"><use href="#ic-man" width="13.8" height="13.8"/></svg>
<div class="t" style="left:195.25px;top:100.00px;font-size:11.9px;color:#1f2329;letter-spacing:-0.067px;">Uploading an Attachment in Chat</div>
<svg class="a" style="left:373.80px;top:97.15px;" width="14.1" height="14.1"><use href="#ic-av" width="14.1" height="14.1"/></svg>
<svg class="a" style="left:20.45px;top:121.60px;" width="10" height="10"><use href="#st-pass" width="10" height="10"/></svg>
<svg class="a" style="left:37.10px;top:120.70px;" width="11" height="12"><use href="#ic-clip" width="11" height="12"/></svg>
<div class="t" style="left:55.90px;top:123.00px;font-size:10px;color:#5d6471;font-family:'Liberation Mono';letter-spacing:-0.107px;-webkit-text-stroke:.2px #5d6471;">Attachments @first</div>
<svg class="a" style="left:178.00px;top:119.60px;" width="13.8" height="13.8"><use href="#ic-man" width="13.8" height="13.8"/></svg>
<div class="t" style="left:195.25px;top:123.00px;font-size:11.9px;color:#1f2329;letter-spacing:-0.036px;">Viewing and Downloading Attachments in Chat</div>
<svg class="a" style="left:446.50px;top:119.60px;" width="14.1" height="14.1"><use href="#ic-av" width="14.1" height="14.1"/></svg>
<svg class="a" style="left:20.45px;top:144.05px;" width="10" height="10"><use href="#st-pass" width="10" height="10"/></svg>
<svg class="a" style="left:37.10px;top:143.15px;" width="11" height="12"><use href="#ic-clip" width="11" height="12"/></svg>
<div class="t" style="left:55.90px;top:145.00px;font-size:10px;color:#5d6471;font-family:'Liberation Mono';letter-spacing:-0.107px;-webkit-text-stroke:.2px #5d6471;">Attachments @first</div>
<svg class="a" style="left:178.00px;top:142.05px;" width="13.8" height="13.8"><use href="#ic-man" width="13.8" height="13.8"/></svg>
<div class="t" style="left:195.25px;top:145.00px;font-size:11.9px;color:#1f2329;letter-spacing:-0.066px;">Removing or Deleting an Attachment from Chat</div>
<svg class="a" style="left:448.25px;top:142.05px;" width="14.1" height="14.1"><use href="#ic-av" width="14.1" height="14.1"/></svg>
<svg class="a" style="left:20.45px;top:166.50px;" width="10" height="10"><use href="#st-pass" width="10" height="10"/></svg>
<svg class="a" style="left:37.10px;top:165.60px;" width="11" height="12"><use href="#ic-clip" width="11" height="12"/></svg>
<div class="t" style="left:55.90px;top:168.00px;font-size:10px;color:#5d6471;font-family:'Liberation Mono';letter-spacing:-0.107px;-webkit-text-stroke:.2px #5d6471;">Attachments @first</div>
<svg class="a" style="left:178.00px;top:164.50px;" width="13.8" height="13.8"><use href="#ic-man" width="13.8" height="13.8"/></svg>
<div class="t" style="left:195.25px;top:168.00px;font-size:11.9px;color:#1f2329;letter-spacing:-0.063px;">Uploading Large Attachments in Chat</div>
<svg class="a" style="left:397.00px;top:164.50px;" width="14.1" height="14.1"><use href="#ic-av" width="14.1" height="14.1"/></svg>
<div class="a" style="left:416.50px;top:165.50px;width:40.75px;height:12px;background:#e8e9ed;border-radius:6px"></div>
<div class="t" style="left:422.10px;top:168.00px;font-size:8.6px;color:#6b7280;letter-spacing:-0.136px;">@tag_A</div>
<svg class="a" style="left:20.45px;top:188.95px;" width="10" height="10"><use href="#st-pass" width="10" height="10"/></svg>
<svg class="a" style="left:37.10px;top:188.05px;" width="11" height="12"><use href="#ic-clip" width="11" height="12"/></svg>
<div class="t" style="left:55.90px;top:190.00px;font-size:10px;color:#5d6471;font-family:'Liberation Mono';letter-spacing:-0.107px;-webkit-text-stroke:.2px #5d6471;">Attachments @first</div>
<svg class="a" style="left:178.00px;top:186.95px;" width="13.8" height="13.8"><use href="#ic-man" width="13.8" height="13.8"/></svg>
<div class="t" style="left:195.25px;top:190.00px;font-size:11.9px;color:#1f2329;letter-spacing:-0.071px;">File Type Restrictions During Upload</div>
<svg class="a" style="left:391.50px;top:186.95px;" width="14.1" height="14.1"><use href="#ic-av" width="14.1" height="14.1"/></svg>
<div class="a" style="left:412.00px;top:187.95px;width:69.50px;height:12px;background:#e8e9ed;border-radius:6px"></div>
<div class="t" style="left:417.60px;top:190.00px;font-size:8.6px;color:#6b7280;letter-spacing:-0.227px;">@story: 12545</div>
<div class="a" style="left:487.75px;top:187.95px;width:70.50px;height:12px;background:#e8e9ed;border-radius:6px"></div>
<div class="t" style="left:493.35px;top:190.00px;font-size:8.6px;color:#6b7280;letter-spacing:-0.227px;">@story: 12445</div>
<div class="a" style="left:564.75px;top:187.95px;width:41.00px;height:12px;background:#e8e9ed;border-radius:6px"></div>
<div class="t" style="left:570.35px;top:190.00px;font-size:8.6px;color:#6b7280;letter-spacing:-0.136px;">@tag_A</div>
<svg class="a" style="left:20.45px;top:211.40px;" width="10" height="10"><use href="#st-pass" width="10" height="10"/></svg>
<svg class="a" style="left:37.10px;top:210.50px;" width="11" height="12"><use href="#ic-clip" width="11" height="12"/></svg>
<div class="t" style="left:55.90px;top:212.00px;font-size:10px;color:#5d6471;font-family:'Liberation Mono';letter-spacing:-0.107px;-webkit-text-stroke:.2px #5d6471;">Attachments @first</div>
<svg class="a" style="left:178.00px;top:209.40px;" width="13.8" height="13.8"><use href="#ic-man" width="13.8" height="13.8"/></svg>
<div class="t" style="left:195.25px;top:212.00px;font-size:11.9px;color:#1f2329;">Multiple Attachments Upload</div>
<svg class="a" style="left:352.25px;top:209.40px;" width="14.1" height="14.1"><use href="#ic-av" width="14.1" height="14.1"/></svg>
<div class="a" style="left:372.25px;top:210.40px;width:70.00px;height:12px;background:#e8e9ed;border-radius:6px"></div>
<div class="t" style="left:377.85px;top:213.00px;font-size:8.6px;color:#6b7280;letter-spacing:-0.227px;">@story: 12545</div>
<div class="a" style="left:448.50px;top:210.40px;width:70.50px;height:12px;background:#e8e9ed;border-radius:6px"></div>
<div class="t" style="left:454.10px;top:213.00px;font-size:8.6px;color:#6b7280;letter-spacing:-0.227px;">@story: 12445</div>
<div class="a" style="left:525.25px;top:210.40px;width:40.75px;height:12px;background:#e8e9ed;border-radius:6px"></div>
<div class="t" style="left:530.85px;top:213.00px;font-size:8.6px;color:#6b7280;letter-spacing:-0.136px;">@tag_A</div>
<svg class="a" style="left:20.45px;top:233.85px;" width="10" height="10"><use href="#st-pass" width="10" height="10"/></svg>
<svg class="a" style="left:37.10px;top:232.95px;" width="11" height="12"><use href="#ic-clip" width="11" height="12"/></svg>
<div class="t" style="left:55.90px;top:235.00px;font-size:10px;color:#5d6471;font-family:'Liberation Mono';letter-spacing:-0.107px;-webkit-text-stroke:.2px #5d6471;">Attachments @first</div>
<svg class="a" style="left:178.00px;top:231.85px;" width="13.8" height="13.8"><use href="#ic-man" width="13.8" height="13.8"/></svg>
<div class="t" style="left:195.25px;top:235.00px;font-size:11.9px;color:#1f2329;letter-spacing:-0.106px;">Image Preview on Click</div>
<svg class="a" style="left:323.50px;top:231.85px;" width="14.1" height="14.1"><use href="#ic-av" width="14.1" height="14.1"/></svg>
<div class="a" style="left:343.25px;top:232.85px;width:70.00px;height:12px;background:#e8e9ed;border-radius:6px"></div>
<div class="t" style="left:348.85px;top:235.00px;font-size:8.6px;color:#6b7280;letter-spacing:-0.227px;">@story: 12545</div>
<div class="a" style="left:419.00px;top:232.85px;width:70.50px;height:12px;background:#e8e9ed;border-radius:6px"></div>
<div class="t" style="left:424.60px;top:235.00px;font-size:8.6px;color:#6b7280;letter-spacing:-0.227px;">@story: 12445</div>
<div class="a" style="left:495.75px;top:232.85px;width:41.25px;height:12px;background:#e8e9ed;border-radius:6px"></div>
<div class="t" style="left:501.35px;top:235.00px;font-size:8.6px;color:#6b7280;letter-spacing:-0.136px;">@tag_A</div>
<svg class="a" style="left:20.45px;top:256.30px;" width="10" height="10"><use href="#st-pass" width="10" height="10"/></svg>
<svg class="a" style="left:37.10px;top:255.40px;" width="11" height="12"><use href="#ic-clip" width="11" height="12"/></svg>
<div class="t" style="left:55.90px;top:257.00px;font-size:10px;color:#5d6471;font-family:'Liberation Mono';letter-spacing:-0.107px;-webkit-text-stroke:.2px #5d6471;">Attachments @first</div>
<svg class="a" style="left:178.00px;top:254.30px;" width="13.8" height="13.8"><use href="#ic-man" width="13.8" height="13.8"/></svg>
<div class="t" style="left:195.25px;top:257.00px;font-size:11.9px;color:#1f2329;letter-spacing:1.566px;">Image Preview with Zoom</div>
<svg class="a" style="left:372.50px;top:254.30px;" width="14.1" height="14.1"><use href="#ic-av" width="14.1" height="14.1"/></svg>
<div class="a" style="left:394.60px;top:255.30px;width:68.40px;height:12px;background:#e8e9ed;border-radius:6px"></div>
<div class="t" style="left:400.20px;top:258.00px;font-size:8.6px;color:#6b7280;letter-spacing:-0.227px;">@story: 12545</div>
<div class="a" style="left:471.50px;top:255.30px;width:66.50px;height:12px;background:#e8e9ed;border-radius:6px"></div>
<div class="t" style="left:477.10px;top:258.00px;font-size:8.6px;color:#6b7280;letter-spacing:-0.227px;">@story: 12445</div>
<div class="a" style="left:547.75px;top:255.30px;width:34.25px;height:12px;background:#e8e9ed;border-radius:6px"></div>
<div class="t" style="left:553.35px;top:258.00px;font-size:8.6px;color:#6b7280;letter-spacing:-0.136px;">@tag_A</div>
</div>
<!-- SIDEBAR -->
<div id="sb">
<div class="a" style="left:0;top:0;width:1px;height:720px;background:#7a72c9"></div>
<svg class="a" style="left:0;top:0" width="56" height="720" viewBox="0 0 56 720">
 <g stroke="#fff" stroke-width="2.6" stroke-linecap="round" fill="none">
  <path d="M20.5 24.5H34.8M20.5 30.3H34.8M20.5 35.9H34.8"/>
 </g>
 <g stroke="#a5b4fc" fill="none" stroke-linecap="square" stroke-linejoin="miter">
  <path d="M21.4 76.4L25.4 80.4L34.8 71" stroke-width="3.2"/>
 </g>
 <circle cx="27.5" cy="114.3" r="8.2" stroke="#fff" stroke-width="1.9" fill="none"/>
 <path d="M25.2 110.2V118.4L31.6 114.3Z" fill="#fff"/>
 <g stroke="#a5b4fc" stroke-width="1.7" fill="none" stroke-linecap="round">
  <path d="M19.5 148.5H29.5M19.5 152.5H29.5M19.5 156.4H25.6"/>
  <path d="M28.2 156.3L31 159.3L36.6 153.6"/>
 </g>
 <path d="M20.2 198.8H24.3V194.6H28.3V190.6H32.3V187H36" stroke="#a5b4fc" stroke-width="2.6" fill="none"/>
 <path d="M20 234H23.8L25.9 228L28.8 238L31.2 232.3L33.1 234H35.7" stroke="#a5b4fc" stroke-width="1.7" fill="none" stroke-linejoin="round" stroke-linecap="round"/>
 <g stroke="#a5b4fc" stroke-width="1.8" fill="none" stroke-linecap="round" stroke-linejoin="round">
  <path d="M18.8 267V265A1.8 1.8 0 0 1 20.6 263.3H34.4A1.8 1.8 0 0 1 36.2 265V278A1.8 1.8 0 0 1 34.4 279.8H20.6A1.8 1.8 0 0 1 18.8 278V276"/>
  <path d="M18.5 271.5H29.5M26 268L29.6 271.5L26 275"/>
 </g>
 <g stroke="#a5b4fc" fill="none">
  <rect x="20.3" y="303.7" width="15" height="14.6" rx="1.4" stroke-width="1.7"/>
  <path d="M24.4 314.8V308.5M27.8 314.8V306.6M31.2 314.8V311" stroke-width="1.5"/>
 </g>
 <g stroke="#a5b4fc" stroke-width="1.5" fill="none">
  <circle cx="22.2" cy="344" r="2"/><circle cx="33.6" cy="344" r="2"/><circle cx="28" cy="356.5" r="2"/>
  <path d="M23.4 345.7L28 352.3L32.5 345.7M28 352.3V354.5"/>
 </g>
 <use href="#ic-gear" x="18.3" y="380.3" width="18.4" height="18.4" style="color:#a5b4fc"/>
 <circle cx="27.5" cy="611.3" r="8.3" stroke="#a5b4fc" stroke-width="1.5" fill="none"/>
 <path d="M24.9 608.6A2.6 2.6 0 1 1 28.6 611C27.8 611.5 27.5 612 27.5 613.2" stroke="#a5b4fc" stroke-width="1.5" fill="none" stroke-linecap="round"/>
 <circle cx="27.5" cy="616.2" r="0.9" fill="#a5b4fc"/>
 <path d="M21.2 643.3H26.4L28.2 645.2H36.6A1.3 1.3 0 0 1 37.9 646.5V654.1A1.3 1.3 0 0 1 36.6 655.4H22.5A1.3 1.3 0 0 1 21.2 654.1Z" fill="#a5b4fc"/>
 <path d="M17.6 646.5V657.3A1.2 1.2 0 0 0 18.8 658.5H34.2" stroke="#a5b4fc" stroke-width="1.6" fill="none"/>
 <use href="#ic-av" x="17.1" y="678.4" width="22.3" height="22.3"/>
</svg>
</div>

</div></body></html>
